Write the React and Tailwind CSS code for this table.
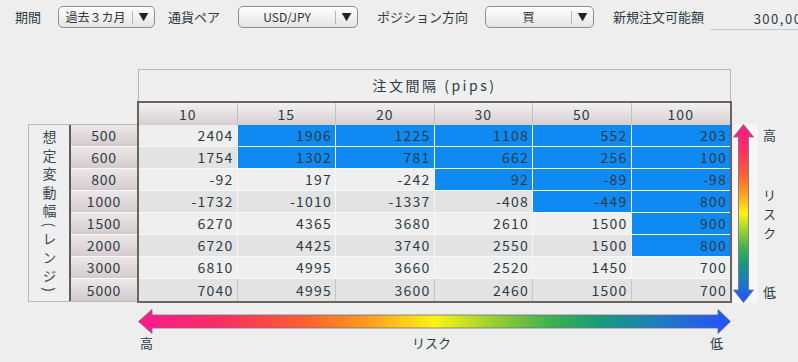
import React from "react";

function Select({ w, text }) {
  return (
    <div className={`flex items-center h-[22px] rounded-[5px] border border-[#8f8f8f] bg-linear-to-b from-[#ffffff] to-[#e4e4e4] ${w}`}>
      <span className="flex-1 text-center text-[12px] leading-none text-[#333]">{text}</span>
      <span className="w-px h-[13px] bg-[#b4b4b4]" />
      <span className="w-[21px] text-center text-[10px] leading-none text-[#222]">▼</span>
    </div>
  );
}

const cols = [10, 15, 20, 30, 50, 100];
const rows = [
  [500, [2404, 1906, 1225, 1108, 552, 203], 1],
  [600, [1754, 1302, 781, 662, 256, 100], 1],
  [800, [-92, 197, -242, 92, -89, -98], 3],
  [1000, [-1732, -1010, -1337, -408, -449, 800], 4],
  [1500, [6270, 4365, 3680, 2610, 1500, 900], 5],
  [2000, [6720, 4425, 3740, 2550, 1500, 800], 5],
  [3000, [6810, 4995, 3660, 2520, 1450, 700], 6],
  [5000, [7040, 4995, 3600, 2460, 1500, 700], 6],
];

function GradStops() {
  return (
    <>
      <stop offset="0" stopColor="#ff1a8c" />
      <stop offset="0.15" stopColor="#ff3060" />
      <stop offset="0.28" stopColor="#ff6030" />
      <stop offset="0.38" stopColor="#ff9820" />
      <stop offset="0.5" stopColor="#fcf414" />
      <stop offset="0.6" stopColor="#98d030" />
      <stop offset="0.7" stopColor="#3cb050" />
      <stop offset="0.78" stopColor="#189a7c" />
      <stop offset="0.87" stopColor="#1e7fb8" />
      <stop offset="1" stopColor="#2550ff" />
    </>
  );
}

export default function App() {
  return (
    <div className="w-[798px] h-[362px] bg-[#eeeeee] overflow-hidden text-[#2c3c44] font-['Noto_Sans_CJK_JP',sans-serif]">
      {/* top bar */}
      <div className="flex items-center h-[34px] pl-[15px] text-[13px] whitespace-nowrap">
        <span>期間</span>
        <div className="ml-[17px]"><Select w="w-[97px]" text="過去３カ月" /></div>
        <span className="ml-[13px]">通貨ペア</span>
        <div className="ml-[18px]"><Select w="w-[120px]" text="USD/JPY" /></div>
        <span className="ml-[19px]">ポジション方向</span>
        <div className="ml-[17px]"><Select w="w-[109px]" text="買" /></div>
        <span className="ml-[19px]">新規注文可能額</span>
        <div className="ml-[6px] flex-none w-[120px] h-[22px] border-b border-[#c4cace] text-right pr-[19px] text-[13px] tracking-[1.5px] leading-[22px] mt-[4px]">300,000</div>
      </div>

      {/* main */}
      <div className="flex mt-[35px] pl-[28px]">
        {/* left labels */}
        <div className="flex flex-col w-[109px]">
          <div className="h-[55px]" />
          <div className="flex h-[178px] border border-r-0 border-[#b8b8b8] bg-[#efefef]">
            <div className="w-[42px] flex items-center justify-center border-r-2 border-[#5c5c5c]">
              <span className="[writing-mode:vertical-rl] text-[14px] tracking-[4.5px] text-[#3a4a52]">想定変動幅(レンジ)</span>
            </div>
            <div className="flex-1 flex flex-col">
              {rows.map(([r]) => (
                <div key={r} className="h-[22px] flex items-center justify-center border-b border-[#f6f6f6] last:border-b-0 bg-linear-to-b from-[#ece7e9] to-[#d4cbce] text-[14px] tracking-[0.8px]">
                  {r}
                </div>
              ))}
            </div>
          </div>
        </div>

        {/* table */}
        <div className="flex flex-col w-[595px]">
          <div className="mx-[1px] h-[32px] border border-b-0 border-[#b5b5b5] bg-[#efefef] flex items-center justify-center text-[14px] tracking-[2.5px]">
            注文間隔 (pips)
          </div>
          <div className="border-2 border-[#6b635d] bg-[#f6f6f6]">
            <div className="grid grid-cols-6">
              {cols.map((c, i) => (
                <div key={c} className={`h-[22px] flex items-center justify-center text-[14px] tracking-[1px] bg-linear-to-b from-[#f3f0f1] to-[#d6cfd1] ${i < 5 ? "border-r border-[#c4c0c1]" : ""}`}>
                  {c}
                </div>
              ))}
              {rows.map(([r, vals, blueFrom], ri) =>
                vals.map((v, ci) => {
                  const blue = ci >= blueFrom;
                  const bg = blue ? "bg-[#0f8af3]" : ri % 2 === 0 ? "bg-[#efefef]" : "bg-[#e3e3e3]";
                  return (
                    <div
                      key={`${r}-${ci}`}
                      className={`h-[22px] flex items-center justify-end pr-[3px] text-[14px] tracking-[1.2px] ${bg} ${ci < 5 ? "border-r border-[#c6c6c6]" : ""} ${ri < 7 ? "border-b border-[#f8f8f8]" : ""}`}
                    >
                      {v}
                    </div>
                  );
                })
              )}
            </div>
          </div>
          <div className="ml-[1px] mt-[6px] h-[26px]">
            <svg width="593" height="26" viewBox="0 0 593 26">
              <defs>
                <linearGradient id="hg" x1="0" y1="0" x2="1" y2="0">
                  <GradStops />
                </linearGradient>
              </defs>
              <path d="M0.5,12.5 L14,0.5 L14,6 L580,6 L580,0.5 L592.5,12.5 L580,24.5 L580,19 L14,19 L14,24.5 Z" fill="url(#hg)" stroke="#6a6c8c" strokeWidth="0.8" />
            </svg>
          </div>
          <div className="flex justify-between pl-[3px] pr-[9px] text-[13px] leading-[16px]">
            <span>高</span>
            <span>リスク</span>
            <span>低</span>
          </div>
        </div>

        {/* right arrow */}
        <div className="flex flex-col ml-[1px]">
          <div className="h-[55px]" />
          <div className="flex">
            <div className="w-[25px] h-[179px] bg-[#f6f6f6]">
              <svg width="22" height="179" viewBox="0 0 22 179">
                <defs>
                  <linearGradient id="vg" x1="0" y1="0" x2="0" y2="1">
                    <GradStops />
                  </linearGradient>
                </defs>
                <path d="M10.5,0.5 L20.5,13 L15.5,13 L15.5,166 L20.5,166 L10.5,178.5 L0.5,166 L5.5,166 L5.5,13 L0.5,13 Z" fill="url(#vg)" stroke="#6a6c8c" strokeWidth="0.8" />
              </svg>
            </div>
            <div className="ml-[5px] h-[178px] flex flex-col justify-between items-center text-[13px] pt-[3px] pb-[2px]">
              <span className="leading-[16px]">高</span>
              <div className="flex flex-col items-center leading-[19px]">
                <span>リ</span>
                <span>ス</span>
                <span>ク</span>
              </div>
              <span className="leading-[16px]">低</span>
            </div>
          </div>
        </div>
      </div>
    </div>
  );
}
